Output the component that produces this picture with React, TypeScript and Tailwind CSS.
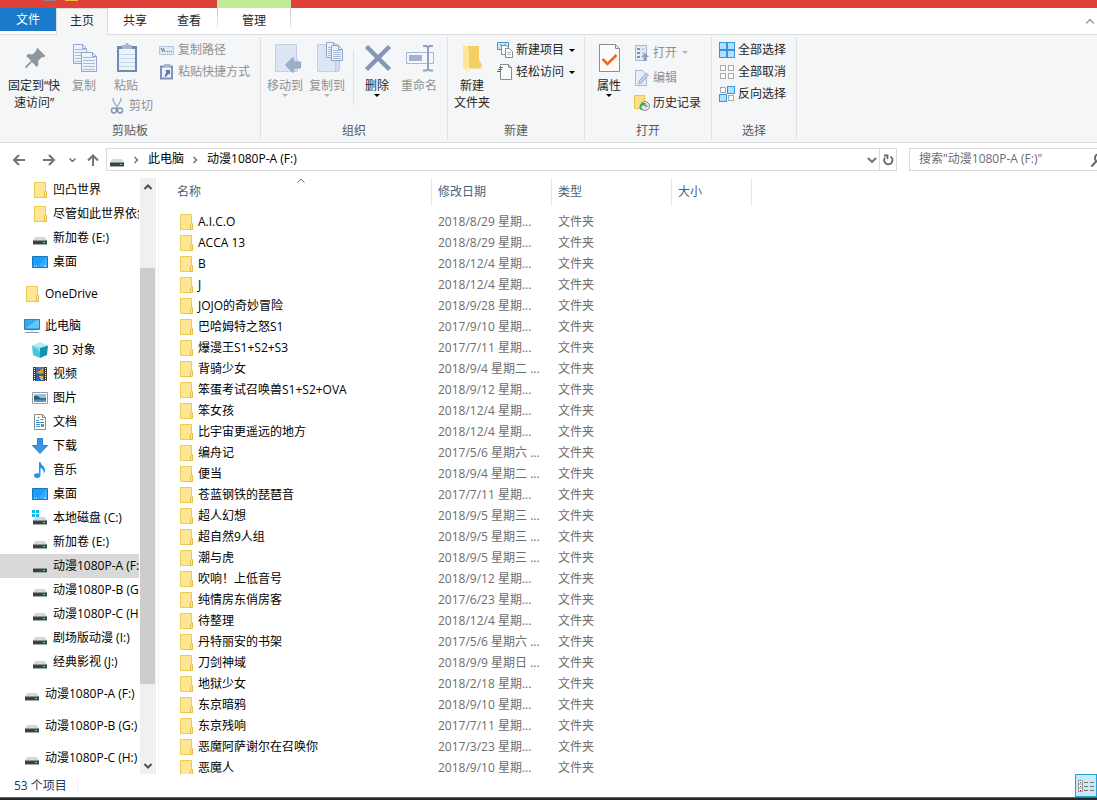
import type { ReactNode } from "react";

type IconName = "folder" | "drive" | "system" | "desktop" | "pc" | "cube" | "video" | "picture" | "doc" | "download" | "music";

type NavItem = { label: string; icon: IconName; top?: boolean; selected?: boolean };

const NAV_GROUPS: NavItem[][] = [
  [
    { label: "凹凸世界", icon: "folder" },
    { label: "尽管如此世界依然美丽", icon: "folder" },
    { label: "新加卷 (E:)", icon: "drive" },
    { label: "桌面", icon: "desktop" },
  ],
  [{ label: "OneDrive", icon: "folder", top: true }],
  [
    { label: "此电脑", icon: "pc", top: true },
    { label: "3D 对象", icon: "cube" },
    { label: "视频", icon: "video" },
    { label: "图片", icon: "picture" },
    { label: "文档", icon: "doc" },
    { label: "下载", icon: "download" },
    { label: "音乐", icon: "music" },
    { label: "桌面", icon: "desktop" },
    { label: "本地磁盘 (C:)", icon: "system" },
    { label: "新加卷 (E:)", icon: "drive" },
    { label: "动漫1080P-A (F:)", icon: "drive", selected: true },
    { label: "动漫1080P-B (G:)", icon: "drive" },
    { label: "动漫1080P-C (H:)", icon: "drive" },
    { label: "剧场版动漫 (I:)", icon: "drive" },
    { label: "经典影视 (J:)", icon: "drive" },
  ],
  [{ label: "动漫1080P-A (F:)", icon: "drive", top: true }],
  [{ label: "动漫1080P-B (G:)", icon: "drive", top: true }],
  [{ label: "动漫1080P-C (H:)", icon: "drive", top: true }],
];

const FILES: [string, string][] = [
  ["A.I.C.O", "2018/8/29 星期..."],
  ["ACCA 13", "2018/8/29 星期..."],
  ["B", "2018/12/4 星期..."],
  ["J", "2018/12/4 星期..."],
  ["JOJO的奇妙冒险", "2018/9/28 星期..."],
  ["巴哈姆特之怒S1", "2017/9/10 星期..."],
  ["爆漫王S1+S2+S3", "2017/7/11 星期..."],
  ["背骑少女", "2018/9/4 星期二 ..."],
  ["笨蛋考试召唤兽S1+S2+OVA", "2018/9/12 星期..."],
  ["笨女孩", "2018/12/4 星期..."],
  ["比宇宙更遥远的地方", "2018/12/4 星期..."],
  ["编舟记", "2017/5/6 星期六 ..."],
  ["便当", "2018/9/4 星期二 ..."],
  ["苍蓝钢铁的琵琶音", "2017/7/11 星期..."],
  ["超人幻想", "2018/9/5 星期三 ..."],
  ["超自然9人组", "2018/9/5 星期三 ..."],
  ["潮与虎", "2018/9/5 星期三 ..."],
  ["吹响！上低音号", "2018/9/12 星期..."],
  ["纯情房东俏房客", "2017/6/23 星期..."],
  ["待整理", "2018/12/4 星期..."],
  ["丹特丽安的书架", "2017/5/6 星期六 ..."],
  ["刀剑神域", "2018/9/9 星期日 ..."],
  ["地狱少女", "2018/2/18 星期..."],
  ["东京暗鸦", "2018/9/10 星期..."],
  ["东京残响", "2017/7/11 星期..."],
  ["恶魔阿萨谢尔在召唤你", "2017/3/23 星期..."],
  ["恶魔人", "2018/9/10 星期..."],
];

/* ---------- small icons, 16x16 ---------- */

function Drive() {
  return (
    <>
      <path d="M3 7h10l2 4H1z" fill="#d5d8da" />
      <path d="M1 10h14v4.5H1z" fill="#3f4244" />
      <path d="M1 10h14v1H1z" fill="#8f9395" />
      <path d="M1 14h14v1H1z" fill="#a9acae" />
      <rect x="11" y="12" width="2" height="1" fill="#4be35a" />
    </>
  );
}

function SmallIcon({ name }: { name: IconName }) {
  return (
    <svg viewBox="0 0 16 16" className="h-4 w-4 shrink-0" aria-hidden="true">
      {name === "folder" && (
        <>
          <path d="M2.5.5h11v15h-11z" fill="#ffe694" stroke="#ebcb52" />
          <path d="M12.5 15.5v-5l1-1h1v6z" fill="#ffe694" stroke="#e3bf45" />
        </>
      )}
      {name === "drive" && <Drive />}
      {name === "system" && (
        <>
          <Drive />
          <path d="M0 0h3v3H0zM4 0h3v3H4zM0 4h3v3H0zM4 4h3v3H4z" fill="#12b5ea" />
        </>
      )}
      {name === "desktop" && (
        <>
          <path d="M.5 2.5h15v11H.5z" fill="#1e9bff" stroke="#1277b8" />
          <path d="M6 13 14 3h1v10z" fill="#3aabff" />
          <path d="M2 12h1M4 12h1M12 12h2" stroke="#e8f5ff" />
        </>
      )}
      {name === "pc" && (
        <>
          <path d="M.5 1.5h15v10H.5z" fill="#35abed" stroke="#3a7da8" />
          <path d="M2 10 13 2h2v8z" fill="#66c6f7" />
          <path d="M6 12h4v1H6z" fill="#c7d2da" />
          <path d="M1 14.5h14" stroke="#8798a5" />
        </>
      )}
      {name === "cube" && (
        <>
          <path d="M0 3.5 8 0l8 3.5L8 6z" fill="#b6edf5" />
          <path d="M0 3.5 8 6v10l-7-3z" fill="#45c6dc" />
          <path d="M16 3.5 8 6v10l7-3z" fill="#1691ae" />
          <path d="M0 3.5 8 6v4z" fill="#7cdeea" />
        </>
      )}
      {name === "video" && (
        <>
          <path d="M1 1h14v14H1z" fill="#3d3d3d" />
          <path d="M4 1h8v7H4z" fill="#4275cf" />
          <path d="M4 8.5h8V15H4z" fill="#2f62bd" />
          <path d="M6 4h3l2-2v5l-3 1-2-1z" fill="#d8a52c" />
          <path d="M5 3h3v2H5z" fill="#b23b34" />
          <path d="M7 10h4v4H9z" fill="#dfb947" />
          <path d="M2.5 2v13M13.5 2v13" stroke="#fff" strokeDasharray="1 1" />
        </>
      )}
      {name === "picture" && (
        <>
          <path d="M.5 2.5h15v11H.5z" fill="#fff" stroke="#9a9a9a" />
          <path d="M2 4h12v8H2z" fill="#8fc2ee" />
          <path d="M2 6q3-1 5 1t7 1v2H2z" fill="#2d5f6b" />
          <path d="M2 9.5h12V12H2z" fill="#5d93c4" />
        </>
      )}
      {name === "doc" && (
        <>
          <path d="M2.5.5h8l3 3v12h-11z" fill="#fff" stroke="#8b8b8b" />
          <path d="M10.5.5v3h3" fill="none" stroke="#8b8b8b" />
          <path d="M4 6.500h3M5.500 3.500h2M8.500 5.500h3M4 8.500h8M4 10.500h4M4 12.500h4" stroke="#3b8ec7" />
          <path d="M9 10h3v3H9z" fill="#62a35b" />
        </>
      )}
      {name === "download" && <path d="M5.500.5h5v7h5L8 15.500.5 7.500h5z" fill="#3f95e5" stroke="#2b7fd0" />}
      {name === "music" && (
        <path d="M7 0h1.500c0 3 4.500 4 4.500 8 0 1.500-.5 2.500-1.500 3.500.5-3-.5-4.500-3-5.500v7c0 1.700-1.500 3-3.500 3S2 15 2 13.500 4 11 7 11.500z" fill="#1d97ea" />
      )}
    </svg>
  );
}

function Caret({ className = "" }: { className?: string }) {
  return (
    <svg viewBox="0 0 6 3" className={`h-[3px] w-1.5 shrink-0 ${className}`} aria-hidden="true">
      <path d="M0 0h6L3 3z" fill="currentColor" />
    </svg>
  );
}

/* ---------- ribbon icons, 32x32 ---------- */

function Page({ x, y, w, h, step = 3 }: { x: number; y: number; w: number; h: number; step?: number }) {
  const lines = [];
  for (let ly = y + 5; ly < y + h - 1; ly += step) {
    lines.push(<path key={ly} d={`M${x + 2} ${ly + 0.5}h${w - 4}`} stroke="#a9bbdb" />);
  }
  return (
    <>
      <path d={`M${x + 0.5} ${y + 0.5}h${w - 5}l4 4v${h - 5}h-${w - 1}z`} fill="#edf3fb" stroke="#92a6cb" />
      <path d={`M${x + w - 4.5} ${y + 0.5}v4h4`} fill="none" stroke="#92a6cb" />
      {lines}
    </>
  );
}

const PALE_FOLDER = (
  <>
    <path d="M6.5 3.5h21v27h-21z" fill="#dbe5f4" stroke="#c3d1e8" />
    <path d="M24.5 30.5v-10l2-2h2v10l-1 2z" fill="#cfdcef" stroke="#bfcde4" />
  </>
);

const PinIcon = <path d="m19.500 7 8 8-2.500 1.500-1-.5-4 4 .5 4-2 2-4.500-5-6 6.500L7 26l6-6.500-5-4.500 2-2 4.500.5 4-4-.5-1z" fill="#8c979f" />;

const CopyIcon = (
  <>
    <Page x={5} y={3} w={14} h={20} />
    <Page x={13} y={11} w={16} h={20} />
  </>
);

const PasteIcon = (
  <>
    <path d="M7 5h20v26H7z" fill="#7189b6" />
    <path d="M9 8h16v21H9z" fill="#edf3fb" />
    <path d="M9 13.5h16M9 17.5h16M9 21.5h16M9 25.5h16" stroke="#c7d6ec" />
    <path d="M12 4h3l1-2h2l1 2h3v4H12z" fill="#a7b6d0" />
  </>
);

const MoveIcon = (
  <>
    {PALE_FOLDER}
    <path d="M16.5 24 24 16.5V21h7.5v6H24v4.5z" fill="#9fb0cc" stroke="#8da0c0" />
  </>
);

const CopyToIcon = (
  <>
    {PALE_FOLDER}
    <Page x={15} y={1} w={12} h={16} step={2} />
    <Page x={20} y={4} w={12} h={16} step={2} />
  </>
);

const DeleteIcon = <path d="m5.5 5.5 23 23m0-23-23 23" stroke="#8596b8" strokeWidth="4.5" />;

const RenameIcon = (
  <>
    <path d="M3.5 11.5h27v11h-27z" fill="#f3f7fc" stroke="#a6b8d6" />
    <path d="M6 14h13v6H6z" fill="#a3b3cf" />
    <path d="M20 5h3.5L25 6.5 26.5 5H30M25 6v22M20 29.5h3.5L25 28l1.5 1.5H30" stroke="#8fa2c4" strokeWidth="2" fill="none" />
  </>
);

const NewFolderIcon = (
  <>
    <path d="M12 5h11v14l2.5 4v4.5H10z" fill="#f5cf66" />
    <path d="M7 5h4l2 5v21l-6-4z" fill="#ffe596" />
    <path d="M13 24v7l-2-2z" fill="#fff0bd" />
  </>
);

const PropertiesIcon = (
  <>
    <path d="M6.5 3.5h16l4 4v23h-20z" fill="#fbfcfc" stroke="#8b8f92" />
    <path d="M22.5 3.5v4h4" fill="none" stroke="#8b8f92" />
    <path d="m9.5 18 5 5 9-9" fill="none" stroke="#f4641c" strokeWidth="2.5" />
  </>
);

/* ---------- ribbon small command icons, 16x16 ---------- */

const CopyPathIcon = (
  <>
    <path d="M.5 4.5h14v8H.5z" fill="#dfe8f5" stroke="#b5c4de" />
    <path d="m2 6 2 4M4 6l2 4M8 9.500h1M10 9.500h1M12 9.500h1" stroke="#5f6f8e" />
  </>
);

const ShortcutIcon = (
  <>
    <path d="M2 2.5h11v12H2z" fill="#eef3fa" stroke="#7f93bb" strokeWidth="2" />
    <path d="M5 0h6v3H5z" fill="#a7b6d0" />
    <path d="M6 6h5v5L9.500 9.500 7 13l-1.500-1 2-4z" fill="#5e76a6" />
  </>
);

const CutIcon = (
  <>
    <path d="M3 0v2l5 9M11 0v2l-5 9" stroke="#a5b0c4" strokeWidth="1.5" fill="none" />
    <path d="M5.500 10.500c-3-1-4 0-4 2s1 2.500 2.500 2.500 2.500-1.500 2.500-4zM8.500 10.500c3-1 4 0 4 2S11.500 15 10 15s-2.500-1.500-2.500-4z" fill="none" stroke="#7d93bd" strokeWidth="1.5" />
  </>
);

const NewItemIcon = (
  <>
    <path d="M.5.5h11v7H.5z" fill="#cfe8f7" stroke="#4b94bd" />
    <path d="M3 3h2M7 3h2" stroke="#3a82ad" />
    <path d="M4.500 3.500h5l2 2v7h-7z" fill="#fff" stroke="#8a8d90" />
    <path d="M8.500 6.500h4l3 3v6h-7z" fill="#fff" stroke="#8a8d90" />
    <path d="M10 10.500h4M10 12.500h4" stroke="#b0b3b5" />
  </>
);

const EasyAccessIcon = (
  <>
    <path d="M3.5.5h8l3 3v12h-11z" fill="#fbfcfc" stroke="#8a8d90" />
    <path d="M11.5.5v3h3" fill="none" stroke="#8a8d90" />
    <path d="M2 3.5h4M1 5.5h4M0 7.5h4" stroke="#2a77a6" />
  </>
);

const OpenIcon = (
  <>
    <path d="M1.500.5h11v15h-11z" fill="#e3ebf6" stroke="#a7b8d6" />
    <path d="M3 3h3v2H3zM3 7h3v2H3zM3 11h3v2H3z" fill="#7f92b8" />
    <path d="M7.500 4h3M7.500 8h3" stroke="#a3b3cf" />
    <path d="m11 8 4 4h-2.500v4h-3v-4H7z" fill="#8a9dc0" />
  </>
);

const EditIcon = (
  <>
    <path d="M1.500.5h7l4 4v11h-11z" fill="#e7eef8" stroke="#a7b8d6" />
    <path d="M5 14v-3l7-8 2.500 2-7 8z" fill="#c3d0e6" stroke="#9eb0cf" />
  </>
);

const HistoryIcon = (
  <>
    <path d="M.5.5h10v13H.5z" fill="#fbe08a" stroke="#e8c64e" />
    <circle cx="11" cy="11" r="4.500" fill="#e4e6e7" stroke="#8b8e90" />
    <path d="m11 8v3h2.500" stroke="#666" fill="none" />
    <path d="M9 15.500c-5-1-4-6-1-7L7.500 7l4 1.500-3 3v-1.500c-2 1-1.500 3.500.5 5.500z" fill="#35ad48" />
  </>
);

function SelectIcon({ on }: { on: boolean[] }) {
  const cells = [[0, 0], [8, 0], [0, 8], [8, 8]];
  return (
    <>
      {cells.map(([x, y], i) =>
        on[i] ? (
          <rect key={i} x={x + 0.5} y={y + 0.5} width="7" height="7" fill="#b5defa" stroke="#3297e0" />
        ) : (
          <rect key={i} x={x + 1.5} y={y + 1.5} width="5" height="5" fill="#fdfdfd" stroke="#a9a9a9" />
        )
      )}
    </>
  );
}

/* ---------- ribbon building blocks ---------- */

type BigProps = { icon: ReactNode; lines: string[]; width?: string; disabled?: boolean; caret?: boolean };

function BigButton({ icon, lines, width = "w-[42px]", disabled, caret }: BigProps) {
  return (
    <button
      disabled={disabled}
      className={`flex shrink-0 flex-col items-center whitespace-nowrap leading-[17px] ${width} ${disabled ? "text-[#919191]" : "text-[#262626]"}`}
    >
      <svg viewBox="0 0 32 32" className="mb-1 h-8 w-8" fill="none" aria-hidden="true">{icon}</svg>
      {lines.map((l) => <span key={l}>{l}</span>)}
      {caret && <Caret className={disabled ? "text-[#b5b5b5]" : "text-black"} />}
    </button>
  );
}

type SmallProps = { icon: ReactNode; label: string; height?: string; disabled?: boolean; caret?: boolean };

function SmallButton({ icon, label, height = "h-[22px]", disabled, caret }: SmallProps) {
  return (
    <button
      disabled={disabled}
      className={`flex items-center gap-[3px] whitespace-nowrap ${height} ${disabled ? "text-[#919191]" : "text-[#262626]"}`}
    >
      <svg viewBox="0 0 16 16" className="h-4 w-4 shrink-0" fill="none" aria-hidden="true">{icon}</svg>
      <span>{label}</span>
      {caret && <Caret className={`ml-0.5 ${disabled ? "text-[#b5b5b5]" : "text-black"}`} />}
    </button>
  );
}

function Group({ title, width, children }: { title: string; width: string; children: ReactNode }) {
  return (
    <section className={`my-0.5 flex shrink-0 flex-col border-r border-[#dfe1e3] ${width}`}>
      <div className="flex h-[85px] items-start">{children}</div>
      <h2 className="text-center leading-[18px] text-[#5a5a5a]">{title}</h2>
    </section>
  );
}

function Ribbon() {
  return (
    <div className="flex h-[108px] shrink-0 border-b border-[#d9dbdc] bg-[#f4f6f8]">
      <Group title="剪贴板" width="w-[261px]">
        <div className="flex pt-1 pl-1">
          <BigButton icon={PinIcon} lines={["固定到“快", "速访问”"]} width="w-[60px]" />
          <BigButton icon={CopyIcon} lines={["复制"]} width="w-10" disabled />
          <div className="flex w-[55px] flex-col items-start">
            <BigButton icon={PasteIcon} lines={["粘贴"]} width="w-11" disabled />
            <div className="pt-px pl-1.5">
              <SmallButton icon={CutIcon} label="剪切" disabled />
            </div>
          </div>
        </div>
        <div className="pt-0.5">
          <SmallButton icon={CopyPathIcon} label="复制路径" disabled />
          <SmallButton icon={ShortcutIcon} label="粘贴快捷方式" disabled />
        </div>
      </Group>

      <Group title="组织" width="w-[187px]">
        <div className="flex pt-1 pl-[3px]">
          <BigButton icon={MoveIcon} lines={["移动到"]} disabled caret />
          <BigButton icon={CopyToIcon} lines={["复制到"]} disabled caret />
        </div>
        <div className="mt-[13px] ml-[5px] mr-0.5 h-[55px] w-px bg-[#dfe1e3]" />
        <div className="flex pt-1">
          <BigButton icon={DeleteIcon} lines={["删除"]} caret />
          <BigButton icon={RenameIcon} lines={["重命名"]} disabled />
        </div>
      </Group>

      <Group title="新建" width="w-[137px]">
        <div className="pt-1 pr-1 pl-[3px]">
          <BigButton icon={NewFolderIcon} lines={["新建", "文件夹"]} />
        </div>
        <div className="pt-0.5">
          <SmallButton icon={NewItemIcon} label="新建项目" caret />
          <SmallButton icon={EasyAccessIcon} label="轻松访问" caret />
        </div>
      </Group>

      <Group title="打开" width="w-[127px]">
        <div className="pt-1 pr-1 pl-[3px]">
          <BigButton icon={PropertiesIcon} lines={["属性"]} caret />
        </div>
        <div className="pt-[3px]">
          <SmallButton icon={OpenIcon} label="打开" height="h-[25px]" disabled caret />
          <SmallButton icon={EditIcon} label="编辑" height="h-[25px]" disabled />
          <SmallButton icon={HistoryIcon} label="历史记录" height="h-[25px]" />
        </div>
      </Group>

      <Group title="选择" width="w-[85px]">
        <div className="pt-0.5 pl-[7px]">
          <SmallButton icon={<SelectIcon on={[true, true, true, true]} />} label="全部选择" />
          <SmallButton icon={<SelectIcon on={[false, false, false, false]} />} label="全部取消" />
          <SmallButton icon={<SelectIcon on={[false, true, true, false]} />} label="反向选择" />
        </div>
      </Group>
    </div>
  );
}

function TabBar() {
  return (
    <header className="shrink-0">
      <div className="flex h-2 bg-[#e04138]">
        <div className="ml-[43px] h-px w-3 bg-[#8d8585]" />
        <div className="ml-2.5 h-px w-[13px] bg-[#e8c23c]" />
        <div className="ml-[139px] w-[74px] bg-[#c1ec98]" />
      </div>
      <div className="flex h-[27px] border-b border-[#d9dbdc] bg-white text-[#262626]">
        <button className="h-[23px] w-14 bg-[#1979ca] text-white">文件</button>
        <button className="-mb-px w-[52px] border border-b-0 border-[#d9dbdc] bg-[#f4f6f8] pb-0.5">主页</button>
        <button className="w-[54px] pb-px">共享</button>
        <button className="w-[54px] pb-px">查看</button>
        <div className="ml-px h-5 w-px bg-linear-to-b from-[#c4c4c4] to-[#eeeeee]" />
        <button className="w-[72px] pb-px">管理</button>
        <div className="h-5 w-px bg-linear-to-b from-[#c4c4c4] to-[#eeeeee]" />
        <button aria-label="最小化功能区" className="ml-auto pr-[3px] text-[#9c9c9c]">
          <svg viewBox="0 0 8 5" className="h-[5px] w-2" fill="none" stroke="currentColor" strokeWidth="1.5"><path d="m0 4.500 4-4 4 4" /></svg>
        </button>
      </div>
    </header>
  );
}

function AddressBar() {
  return (
    <div className="flex h-[35px] shrink-0 items-start pt-[5px]">
      <div className="flex h-[23px] w-[106px] shrink-0 items-center pl-3 text-[#737373]">
        <button aria-label="后退" className="mr-4">
          <svg viewBox="0 0 14 12" className="h-3 w-3.5" fill="none" stroke="currentColor" strokeWidth="2"><path d="M7 1 2 6l5 5M2 6h11" /></svg>
        </button>
        <button aria-label="前进" className="mr-[13px]">
          <svg viewBox="0 0 14 12" className="h-3 w-3.5" fill="none" stroke="currentColor" strokeWidth="2"><path d="m7 1 5 5-5 5M12 6H1" /></svg>
        </button>
        <button aria-label="最近浏览的位置" className="mr-2.5">
          <svg viewBox="0 0 7 4" className="h-1 w-[7px]" fill="none" stroke="currentColor" strokeWidth="1.5"><path d="m.5.5 3 3 3-3" /></svg>
        </button>
        <button aria-label="上移">
          <svg viewBox="0 0 14 12" className="h-3 w-3.5" fill="none" stroke="currentColor" strokeWidth="2"><path d="m2 6.500 5-5 5 5M7 2v10" /></svg>
        </button>
      </div>

      <div className="flex h-[23px] min-w-0 flex-1 items-center border border-[#d9d9d9] pl-0.5">
        <SmallIcon name="drive" />
        <Crumb />
        <a href="#pc" className="pb-px">此电脑</a>
        <Crumb />
        <a href="#f" className="truncate pb-px">动漫1080P-A (F:)</a>
        <button aria-label="历史地址" className="ml-auto pr-0.5 text-[#737373]">
          <svg viewBox="0 0 10 6" className="h-1.5 w-2.5" fill="none" stroke="currentColor" strokeWidth="2"><path d="m1 1 4 4 4-4" /></svg>
        </button>
        <button aria-label="刷新" className="flex h-full w-[17px] items-center justify-center border-l border-[#d9d9d9] text-[#666]">
          <svg viewBox="0 0 12 12" className="h-3 w-3" fill="none" stroke="currentColor" strokeWidth="1.8"><path d="M8.500 2.500A4.200 4.200 0 1 1 3 3.500M2 1.500h3.500V5" /></svg>
        </button>
      </div>

      {/* runs past the window edge */}
      <label className="-mr-2 ml-3 flex h-[23px] w-[196px] shrink-0 items-center border border-[#d9d9d9] pl-[9px]">
        <input type="search" aria-label="搜索" placeholder={'搜索"动漫1080P-A (F:)"'} className="min-w-0 flex-1 pb-px outline-none placeholder:text-[#6d6d6d]" />
        <svg viewBox="0 0 14 14" className="h-3.5 w-3.5 shrink-0 text-[#666]" fill="none" stroke="currentColor" strokeWidth="2" aria-hidden="true">
          <circle cx="9" cy="5" r="4" />
          <path d="m6.500 8-5 5.500" />
        </svg>
      </label>
    </div>
  );
}

function Crumb() {
  return (
    <svg viewBox="0 0 5 8" className="mx-[9px] h-2 w-[5px] shrink-0 text-[#737373]" fill="none" stroke="currentColor" strokeWidth="1.5" aria-hidden="true">
      <path d="m.5 1 3 3-3 3" />
    </svg>
  );
}

function ScrollBar() {
  return (
    <div className="flex w-4 shrink-0 flex-col bg-[#f0f0f0] text-[#505050]">
      <button aria-label="向上滚动" className="flex h-[17px] items-center justify-center">
        <svg viewBox="0 0 8 6" className="h-1.5 w-2" fill="none" stroke="currentColor" strokeWidth="2"><path d="m.5 5 3.500-3.500L7.500 5" /></svg>
      </button>
      <div className="flex-13" />
      <div className="mr-px flex-74 bg-[#cdcdcd]" />
      <div className="flex-13" />
      <button aria-label="向下滚动" className="flex h-[17px] items-center justify-center">
        <svg viewBox="0 0 8 6" className="h-1.5 w-2" fill="none" stroke="currentColor" strokeWidth="2"><path d="m.5 1 3.500 3.500L7.500 1" /></svg>
      </button>
    </div>
  );
}

function NavPane() {
  return (
    <div className="flex w-[159px] shrink-0 border-r border-[#f3f3f3]">
      <nav className="mr-px flex min-w-0 flex-1 flex-col gap-2 overflow-hidden">
        {NAV_GROUPS.map((group, g) => (
          <ul key={g}>
            {group.map((item) => (
              <li key={item.label}>
                <a
                  href={`#${item.label}`}
                  className={`flex h-6 items-center gap-[5px] whitespace-nowrap ${item.top ? "pl-6" : "pl-8"} ${item.selected ? "bg-[#d9d9d9]" : ""}`}
                >
                  <SmallIcon name={item.icon} />
                  <span>{item.label}</span>
                </a>
              </li>
            ))}
          </ul>
        ))}
      </nav>
      <ScrollBar />
      <div className="w-0.5" />
    </div>
  );
}

function HeadCell({ label, width, sorted }: { label: string; width: string; sorted?: boolean }) {
  return (
    <th className={`p-0 text-left font-normal text-[#4c607a] ${width}`}>
      <div className="relative mb-[5px] flex h-7 items-center border-r border-[#e5e5e5] pl-1.5">
        {label}
        {sorted && (
          <svg viewBox="0 0 8 5" className="absolute top-0 left-1/2 h-[5px] w-2 -translate-x-1/2" fill="none" stroke="#6b6b6b" aria-hidden="true">
            <path d="m.5 4.500 3.500-3.500 3.500 3.500" />
          </svg>
        )}
      </div>
    </th>
  );
}

function FileList() {
  return (
    <main className="min-w-0 flex-1 overflow-hidden pl-3">
      <table className="table-fixed border-collapse">
        <thead>
          <tr>
            <HeadCell label="名称" width="w-[261px]" sorted />
            <HeadCell label="修改日期" width="w-[120px]" />
            <HeadCell label="类型" width="w-[120px]" />
            <HeadCell label="大小" width="w-20" />
          </tr>
        </thead>
        <tbody className="text-[#6d6d6d]">
          {FILES.map(([name, date]) => (
            <tr key={name} className="h-[21px] whitespace-nowrap">
              <td className="p-0 pl-[7px] text-black">
                <div className="flex items-center gap-1">
                  <SmallIcon name="folder" />
                  {name}
                </div>
              </td>
              <td className="p-0 pl-1.5">{date}</td>
              <td className="p-0 pl-1.5">文件夹</td>
              <td />
            </tr>
          ))}
        </tbody>
      </table>
    </main>
  );
}

function StatusBar() {
  return (
    <footer className="shrink-0 border-b-2 border-[#25282b]">
      <div className="flex h-6 items-center border-b border-[#d3352c] text-[#1e395b]">
        <span className="pl-3.5">53 个项目</span>
        <span className="ml-2.5 h-3 w-px bg-[#f0f0f0]" />
        <button aria-label="详细信息" className="ml-auto flex h-full w-[22px] items-center justify-center border border-[#26a0da] bg-[#cbe8f6]">
          <svg viewBox="0 0 18 14" className="h-3.5 w-[18px] shrink-0" fill="none" aria-hidden="true">
            <path d="M1.500 1.500h4v11h-4zM1 5h5M1 9h5" stroke="#999" fill="#fff" />
            <path d="M7 3.500h4M13 3.500h4M7 7.500h4M13 7.500h4M7 11.500h4M13 11.500h4" stroke="#777" />
            <path d="M3 3h1v1H3zM3 7h1v1H3z" fill="#456" />
            <path d="M3 11h1v1H3z" fill="#b02" />
          </svg>
        </button>
      </div>
    </footer>
  );
}

export default function App() {
  return (
    <div className="flex h-screen flex-col overflow-hidden bg-white font-['Open_Sans','Noto_Sans_CJK_SC',sans-serif] text-[12px] leading-4 text-black">
      <TabBar />
      <Ribbon />
      <AddressBar />
      <div className="flex min-h-0 flex-1">
        <NavPane />
        <FileList />
      </div>
      <StatusBar />
    </div>
  );
}
